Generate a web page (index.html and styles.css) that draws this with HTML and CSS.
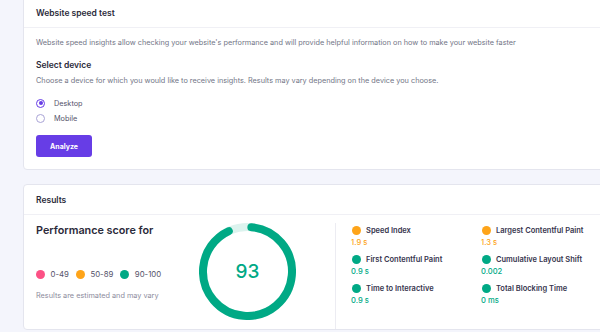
FILE: index.html
```html
<!DOCTYPE html>
<html>
<head>
<meta charset="utf-8">
<link rel="stylesheet" href="styles.css">
</head>
<body>
<div class="page">
  <section class="card card-first">
    <div class="card-head head-first">Website speed test</div>
    <div class="card-body body-first">
      <p class="desc">Website speed insights allow checking your website's performance and will provide helpful information on how to make your website faster</p>
      <h3 class="sub">Select device</h3>
      <p class="desc desc-tight">Choose a device for which you would like to receive insights. Results may vary depending on the device you choose.</p>
      <div class="radios">
        <label class="radio"><span class="radio-dot checked"></span>Desktop</label>
        <label class="radio"><span class="radio-dot"></span>Mobile</label>
      </div>
      <button class="btn">Analyze</button>
    </div>
  </section>

  <section class="card card-second">
    <div class="card-head head-second">Results</div>
    <div class="results">
      <div class="score-info">
        <h2 class="score-title">Performance score for</h2>
        <div class="legend">
          <span class="ldot pink"></span><span class="ltxt">0-49</span>
          <span class="ldot orange"></span><span class="ltxt">50-89</span>
          <span class="ldot green"></span><span class="ltxt">90-100</span>
        </div>
        <p class="note">Results are estimated and may vary</p>
      </div>
      <div class="gauge">
        <svg width="97" height="97" viewBox="0 0 97 97">
          <circle cx="48.5" cy="48.5" r="44.5" fill="none" stroke="#dcf3ee" stroke-width="8"/>
          <circle cx="48.5" cy="48.5" r="44.5" fill="none" stroke="#00a985" stroke-width="8" stroke-linecap="round" stroke-dasharray="256 400" transform="rotate(-85 48.5 48.5)"/>
        </svg>
        <span class="gauge-num">93</span>
      </div>
      <div class="metrics">
        <div class="metric">
          <div class="m-title"><span class="mdot orange"></span>Speed Index</div>
          <div class="m-val v-orange">1.9 s</div>
        </div>
        <div class="metric">
          <div class="m-title"><span class="mdot orange"></span>Largest Contentful Paint</div>
          <div class="m-val v-orange">1.3 s</div>
        </div>
        <div class="metric">
          <div class="m-title"><span class="mdot green"></span>First Contentful Paint</div>
          <div class="m-val v-green">0.9 s</div>
        </div>
        <div class="metric">
          <div class="m-title"><span class="mdot green"></span>Cumulative Layout Shift</div>
          <div class="m-val v-green">0.002</div>
        </div>
        <div class="metric">
          <div class="m-title"><span class="mdot green"></span>Time to Interactive</div>
          <div class="m-val v-green">0.9 s</div>
        </div>
        <div class="metric">
          <div class="m-title"><span class="mdot green"></span>Total Blocking Time</div>
          <div class="m-val v-green">0 ms</div>
        </div>
      </div>
    </div>
  </section>
</div>
</body>
</html>
```

FILE: styles.css
```css
html, body {
  margin: 0;
  padding: 0;
}
body {
  background: #f4f5fc;
  font-family: Inter, "DejaVu Sans", sans-serif;
  color: #36344d;
  width: 600px;
  height: 332px;
  overflow: hidden;
}
.page {
  padding-left: 23px;
  width: 577px;
  overflow: hidden;
}
.card {
  background: #fff;
  border: 1px solid #e4e5ee;
  border-radius: 4px;
  margin-right: -30px;
}
.card-first {
  margin-top: -5px;
}
.card-second {
  margin-top: 14px;
}
.card-head {
  box-sizing: border-box;
  padding-left: 12px;
  font-size: 8.5px;
  line-height: 12px;
  font-weight: 600;
  color: #2b2a3a;
  border-bottom: 1px solid #f0f0f5;
}
.head-first {
  height: 32px;
  padding-top: 11px;
}
.head-second {
  height: 30px;
  padding-top: 9px;
}
.body-first {
  padding: 9px 12px 12px;
}
.desc {
  margin: 0;
  font-size: 7.3px;
  line-height: 12px;
  color: #727586;
}
.sub {
  margin: 10px 0 0;
  font-size: 8.5px;
  line-height: 12px;
  font-weight: 600;
  color: #2b2a3a;
}
.desc-tight {
  margin-top: 4px;
}
.radios {
  margin-top: 10px;
  display: flex;
  flex-direction: column;
  gap: 3px;
}
.radio {
  display: flex;
  align-items: center;
  height: 12px;
  font-size: 7.3px;
  color: #55536a;
}
.radio-dot {
  box-sizing: border-box;
  width: 9px;
  height: 9px;
  border-radius: 50%;
  border: 1px solid #a9a3d6;
  margin-right: 9px;
  position: relative;
}
.radio-dot.checked {
  border-color: #673de6;
}
.radio-dot.checked::after {
  content: "";
  position: absolute;
  left: 1.5px;
  top: 1.5px;
  width: 4px;
  height: 4px;
  border-radius: 50%;
  background: #673de6;
}
.btn {
  margin-top: 11px;
  width: 56px;
  height: 22px;
  border: none;
  border-radius: 3px;
  background: #673de6;
  color: #fff;
  font-family: Inter, "DejaVu Sans", sans-serif;
  font-size: 7px;
  font-weight: 700;
  padding: 0;
  display: block;
}
.results {
  display: flex;
  padding-top: 8px;
}
.score-info {
  width: 163px;
  padding-left: 12px;
  flex: none;
}
.score-title {
  margin: 0;
  font-size: 10.8px;
  line-height: 16px;
  font-weight: 600;
  color: #2b2a3a;
}
.legend {
  margin-top: 29px;
  display: flex;
  align-items: center;
  height: 12px;
}
.ldot {
  width: 9px;
  height: 9px;
  border-radius: 50%;
  margin-right: 5.5px;
  flex: none;
}
.ltxt {
  font-size: 7.8px;
  color: #55536a;
  margin-right: 7px;
}
.pink { background: #fc5185; }
.orange { background: #fea419; }
.green { background: #00a985; }
.note {
  margin: 11px 0 0;
  font-size: 7.3px;
  line-height: 10px;
  color: #8c8b9c;
}
.gauge {
  width: 97px;
  height: 97px;
  flex: none;
  margin-bottom: 9px;
  position: relative;
  display: flex;
  align-items: center;
  justify-content: center;
}
.gauge svg {
  position: absolute;
  left: 0;
  top: 0;
}
.gauge-num {
  position: relative;
  font-size: 19px;
  font-weight: 500;
  color: #00a985;
}
.metrics {
  margin-left: 39px;
  border-left: 1px solid #ececf2;
  padding-left: 15px;
  display: grid;
  grid-template-columns: 130px 130px;
  row-gap: 5px;
  align-content: start;
  padding-top: 1px;
}
.m-title {
  display: flex;
  align-items: center;
  height: 12px;
  font-size: 7.5px;
  font-weight: 600;
  color: #36344d;
  white-space: nowrap;
}
.mdot {
  width: 9px;
  height: 9px;
  border-radius: 50%;
  margin-left: 0.5px;
  margin-right: 5.5px;
  flex: none;
}
.m-val {
  margin-top: 2px;
  font-size: 7.6px;
  line-height: 10px;
  font-weight: 500;
}
.v-orange { color: #fea419; }
.v-green { color: #00a985; }
```
